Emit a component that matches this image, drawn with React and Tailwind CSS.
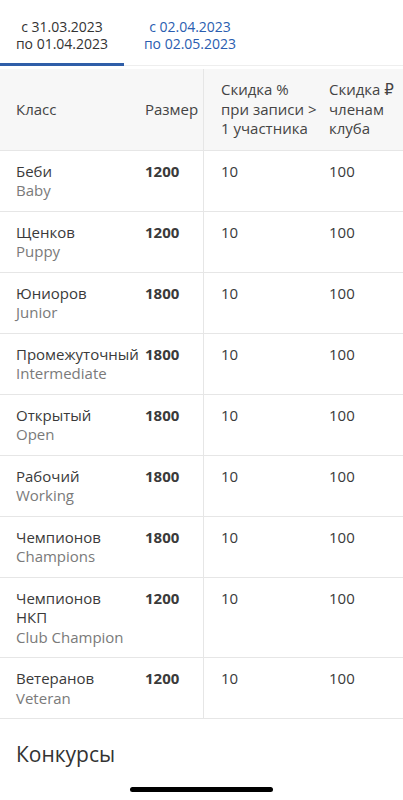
import React from "react";

const rows = [
  { ru: ["Беби"], en: "Baby", size: "1200" },
  { ru: ["Щенков"], en: "Puppy", size: "1200" },
  { ru: ["Юниоров"], en: "Junior", size: "1800" },
  { ru: ["Промежуточный"], en: "Intermediate", size: "1800" },
  { ru: ["Открытый"], en: "Open", size: "1800" },
  { ru: ["Рабочий"], en: "Working", size: "1800" },
  { ru: ["Чемпионов"], en: "Champions", size: "1800" },
  { ru: ["Чемпионов", "НКП"], en: "Club Champion", size: "1200" },
  { ru: ["Ветеранов"], en: "Veteran", size: "1200" },
];

const Row = ({ row }) => (
  <div className="grid grid-cols-[137px_67px_108px_1fr] border-b border-[#e6e6e6] text-[15px] leading-[19.5px] text-[#3a3a3a]">
    <div className="pl-4 pt-[11px] pb-[10px] whitespace-nowrap">
      {row.ru.map((t) => (
        <div key={t}>{t}</div>
      ))}
      <div className="text-[#7a7a7a]">{row.en}</div>
    </div>
    <div className="pl-2 pt-[11px] pb-[10px] font-bold border-r border-[#e6e6e6]">{row.size}</div>
    <div className="pl-[17px] pt-[11px] pb-[10px]">10</div>
    <div className="pl-[17px] pt-[11px] pb-[10px]">100</div>
  </div>
);

export default function App() {
  return (
    <div
      className="w-[403px] h-[800px] bg-white overflow-hidden flex flex-col"
      style={{ fontFamily: "'Open Sans', 'DejaVu Sans', sans-serif" }}
    >
      <div className="flex h-[66px] border-b border-[#eeeeee]">
        <div className="w-[124px] flex flex-col items-center pt-[18px] text-[14px] leading-[17px] text-[#333] border-b-[3px] border-[#2f5ea8] -mb-px">
          <span>с 31.03.2023</span>
          <span>по 01.04.2023</span>
        </div>
        <div className="w-[124px] ml-[4px] flex flex-col items-center pt-[18px] text-[14px] leading-[17px] text-[#2a5db0]">
          <span>с 02.04.2023</span>
          <span>по 02.05.2023</span>
        </div>
      </div>

      <div className="grid grid-cols-[137px_67px_108px_1fr] bg-[#f7f7f7] border-b border-[#e6e6e6] text-[15px] leading-[19.5px] text-[#444] mt-[3px]">
        <div className="pl-4 flex items-center">Класс</div>
        <div className="pl-2 flex items-center border-r border-[#e6e6e6]">Размер</div>
        <div className="pl-[17px] pt-[11px] pb-[11px] whitespace-nowrap">
          Скидка %<br />при записи &gt;<br />1 участника
        </div>
        <div className="pl-[17px] pt-[11px] pb-[11px] whitespace-nowrap">
          Скидка ₽<br />членам<br />клуба
        </div>
      </div>

      {rows.map((r, i) => (
        <Row key={i} row={r} />
      ))}

      <div className="pl-4 pt-[21px] text-[21px] leading-[28px] text-[#333]">Конкурсы</div>

      <div className="flex justify-center mt-auto pb-[8px]">
        <div className="w-[143px] h-[5px] rounded-full bg-black" />
      </div>
    </div>
  );
}
